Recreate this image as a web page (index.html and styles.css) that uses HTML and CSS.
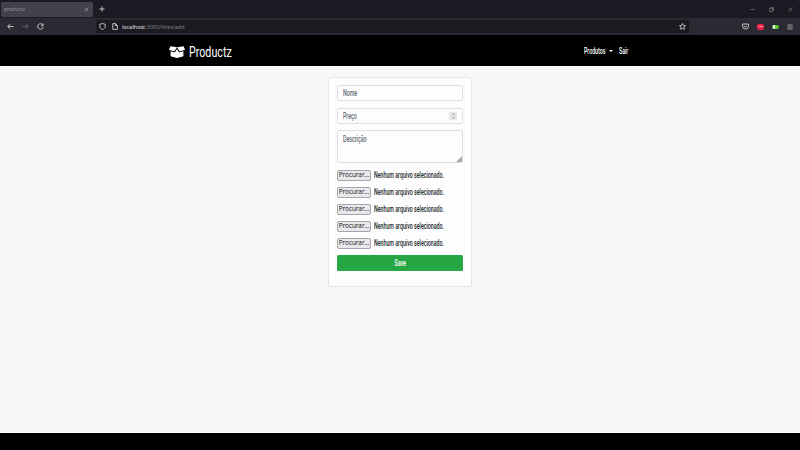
FILE: index.html
```html
<!DOCTYPE html>
<html lang="pt-BR">
<head>
<meta charset="utf-8">
<title>productz</title>
<link rel="stylesheet" href="styles.css">
</head>
<body>
<div class="tabs">
  <div class="tab"><span class="tab-title">productz</span><svg width="5" height="5" viewBox="0 0 5 5"><path d="M.7.7l3.6 3.6M4.3.7L.7 4.3"/></svg></div>
  <svg class="plus" width="6" height="6" viewBox="0 0 6 6"><path d="M3 .4v5.2M.4 3h5.2"/></svg>
  <div class="window-controls">
    <svg width="5" height="5" viewBox="0 0 5 5"><path d="M.5 2.5h4"/></svg>
    <svg width="5" height="5" viewBox="0 0 5 5"><path d="M.5 1.5h3v3h-3zM1.5 1V.5h3v3H4"/></svg>
    <svg width="5" height="5" viewBox="0 0 5 5"><path d="M.5.5l4 4M4.5.5l-4 4"/></svg>
  </div>
</div>
<div class="toolbar">
  <div class="navigation">
    <svg width="7" height="7" viewBox="0 0 7 7"><path d="M6.6 3.5H.8M3.3.9L.7 3.5l2.6 2.6"/></svg>
    <svg class="muted" width="7" height="7" viewBox="0 0 7 7"><path d="M.4 3.5h5.8M3.7.9l2.6 2.6-2.6 2.6"/></svg>
    <svg width="7" height="7" viewBox="0 0 7 7"><path d="M5.6 1.8A2.7 2.7 0 1 0 6.1 4M6.2.4v2.3H4"/></svg>
  </div>
  <div class="address">
    <svg width="7" height="7" viewBox="0 0 7 7"><path d="M3.5.5l2.700.8v1.900c0 1.600-1 2.600-2.700 3.300C1.800 5.800.8 4.800.8 3.200V1.300z"/></svg>
    <svg class="page-icon" width="6" height="7" viewBox="0 0 6 7"><path d="M.8.6h2.700l1.800 1.800v4H.8zM3.400.6v2h1.900"/></svg>
    <span class="url"><b>localhost</b>:3000/links/add</span>
    <svg class="star" width="7" height="7" viewBox="0 0 14 14"><path d="M7 1l1.800 3.900 4.200.5-3.100 2.900.8 4.200L7 10.400l-3.700 2.100.8-4.200L1 5.400l4.200-.5z"/></svg>
  </div>
  <div class="extensions">
    <svg width="7" height="7" viewBox="0 0 7 7"><path d="M.6 1h5.800v2.200a2.900 2.900 0 0 1-5.800 0zM2 2.800l1.500 1.400L5 2.800"/></svg>
    <span class="abp">ABP</span>
    <span class="toggle"></span>
    <svg class="menu" width="6" height="6" viewBox="0 0 6 6"><path d="M.3 1h5.400M.3 3h5.400M.3 5h5.400"/></svg>
  </div>
</div>
<header class="navbar">
  <svg class="box" width="16" height="12" viewBox="0 0 16 12"><path d="M1.500.2L8 1.200 5.600 5Q5.300 5.400 4.800 5.200L.5 4Q-.1 3.800.1 3.200zM14.500.2L8 1.200 10.400 5Q10.700 5.400 11.200 5.200L15.500 4Q16.100 3.800 15.900 3.200zM1.600 5.200L5 6.200Q6 6.400 6.500 5.600L8 3.100 9.500 5.600Q10 6.400 11 6.200L14.400 5.200V9.700Q14.400 10.300 13.800 10.500L8 12 2.200 10.500Q1.600 10.300 1.600 9.700z"/></svg>
  <span class="brand"><span class="narrow">Productz</span></span>
  <nav>
    <span class="products"><span class="narrow">Produtos</span></span><i class="caret"></i><span class="exit"><span class="narrow">Sair</span></span>
  </nav>
</header>
<main>
  <form class="card">
    <div class="field"><span class="narrow">Nome</span></div>
    <div class="field"><span class="narrow">Preço</span><span class="spinner"><svg width="5" height="6" viewBox="0 0 5 6"><path d="M1 2l1.500-1.300L4 2M1 4l1.500 1.300L4 4"/></svg></span></div>
    <div class="field area"><span class="narrow">Descrição</span><svg class="grip" width="6" height="6" viewBox="0 0 6 6"><path d="M6 0v6H0z"/></svg></div>
    <div class="file"><span class="browse">Procurar...</span><span class="narrow">Nenhum arquivo selecionado.</span></div>
    <div class="file"><span class="browse">Procurar...</span><span class="narrow">Nenhum arquivo selecionado.</span></div>
    <div class="file"><span class="browse">Procurar...</span><span class="narrow">Nenhum arquivo selecionado.</span></div>
    <div class="file"><span class="browse">Procurar...</span><span class="narrow">Nenhum arquivo selecionado.</span></div>
    <div class="file"><span class="browse">Procurar...</span><span class="narrow">Nenhum arquivo selecionado.</span></div>
    <div class="save"><span class="narrow">Save</span></div>
  </form>
</main>
<footer></footer>
</body>
</html>
```
FILE: styles.css
```css
* { box-sizing: border-box; }
body {
  margin: 0;
  height: 450px;
  overflow: hidden;
  display: flex;
  flex-direction: column;
  background: #f5f7f9;
  font-family: Roboto, sans-serif;
}
svg { display: block; flex: none; fill: none; stroke: #e4e3e8; stroke-width: .8; }
.narrow { display: inline-block; white-space: nowrap; transform: scaleX(.62); transform-origin: left center; }

.tabs { height: 18px; flex: none; display: flex; align-items: center; background: #1c1b24; }
.tab {
  width: 92px; height: 15px; margin-left: 1px; padding: 0 4px 0 3px;
  display: flex; align-items: center; justify-content: space-between;
  background: #42414d; border-radius: 1.5px;
}
.tab svg { stroke: #c4c3ca; stroke-width: .6; }
.tab-title { font: 5px "Open Sans", sans-serif; color: #a3a2aa; }
.plus { margin-left: 6px; }
.window-controls { margin-left: auto; margin-right: 7px; display: flex; gap: 14px; }
.window-controls svg { stroke: #8c8b91; stroke-width: .6; }

.toolbar { height: 17px; flex: none; display: flex; align-items: center; background: #2b2a33; }
.navigation { width: 96px; padding-left: 6.5px; display: flex; gap: 8px; }
.navigation .muted { stroke: #696871; }
.address {
  width: 593px; height: 13px; padding: 0 3px;
  display: flex; align-items: center;
  background: #1c1b22; border-radius: 1.5px;
}
.page-icon { margin-left: 6px; }
.url { margin-left: 4px; font: 5.5px "Open Sans", sans-serif; color: #8b8a91; white-space: nowrap; }
.url b { font-weight: 400; color: #f0eff4; }
.star { margin-left: auto; stroke-width: 1.5; }
.extensions { margin-left: auto; margin-right: 7px; display: flex; align-items: center; gap: 8px; }
.menu { stroke-width: .6; }
.abp {
  width: 7px; height: 6px; border-radius: 2px; background: #ed1e45; overflow: hidden;
  font: 700 2.5px/6px "Liberation Sans", sans-serif; color: #fff; text-align: center;
}
.toggle { width: 7px; height: 4px; border-radius: 2px; background: linear-gradient(90deg, #6bd34b 20%, #e4f7de 20% 50%, #54c930 50%); }

.navbar {
  height: 31px; flex: none; padding-left: 169px;
  display: flex; align-items: center; background: #000; color: #fff;
}
.box { fill: #fff; stroke: none; margin-top: 2px; }
.brand { width: 47px; margin-left: 3.5px; font-size: 15.5px; margin-top: 3px; }
.brand .narrow { transform: scaleX(.69); }
nav { margin-left: 348px; margin-top: 1px; display: flex; align-items: center; font-size: 8.5px; font-weight: 500; }
.products { width: 25px; }
.caret { border: 1.5px solid transparent; border-width: 2px 2px 0; border-top-color: #fff; }
.exit { margin-left: 6.5px; }

main { flex: 1; padding-top: 9.5px; border-top: 1px solid #fff; border-bottom: 1px solid #fff; }
.card {
  width: 144px; height: 210px; margin: 0 auto; padding: 7.5px 8px 8px;
  background: #fdfdfe; border: 1px solid #e4e6e8; border-radius: 2px;
  font-size: 8.5px; font-weight: 500; color: #212529;
}
.field {
  height: 16px; margin-bottom: 6.5px; padding: 0 5px;
  position: relative; display: flex; align-items: center; justify-content: space-between;
  border: 1px solid #dcdfe2; border-radius: 2px; color: #656b71;
}
.spinner { width: 8px; height: 8px; display: grid; place-items: center; background: #e6e6e8; border-radius: 1px; }
.spinner svg { stroke: #77777b; stroke-width: .6; }
.area { height: 33px; padding-top: 3px; align-items: flex-start; }
.grip { position: absolute; right: 0; bottom: 0; fill: #a9a9ad; stroke: none; }
.file { height: 11px; margin-bottom: 6.1px; display: flex; align-items: center; }
.browse {
  width: 34px; height: 11px; margin-right: 2.5px; flex: none;
  border: 1px solid #a5a5aa; border-radius: 2px; background: #e9e9ed;
  font: 6.5px/8.5px "Open Sans", sans-serif; letter-spacing: -.1px; color: #111;
  display: flex; justify-content: center;
}
.save {
  height: 16px; margin-top: 6px; display: grid; place-items: center;
  background: #27a744; border-radius: 1.5px; color: #fff;
}
.save .narrow { transform-origin: center; }
footer { height: 17px; flex: none; background: #000; }
```
